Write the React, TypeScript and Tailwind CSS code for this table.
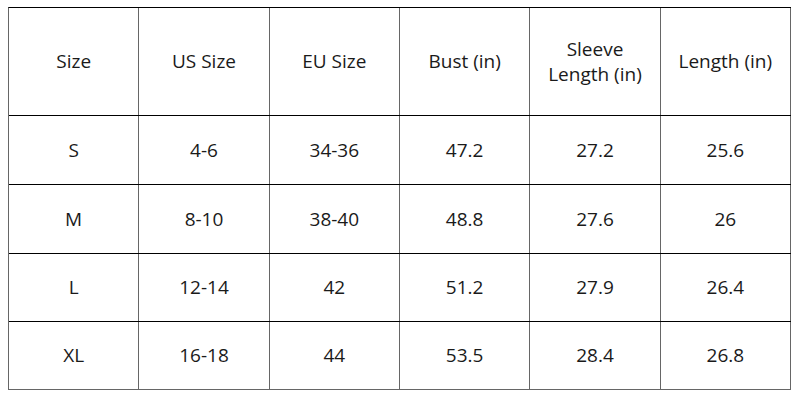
import React from "react";

const header = ["Size", "US Size", "EU Size", "Bust (in)", "Sleeve Length (in)", "Length (in)"];
const rows = [
  ["S", "4-6", "34-36", "47.2", "27.2", "25.6"],
  ["M", "8-10", "38-40", "48.8", "27.6", "26"],
  ["L", "12-14", "42", "51.2", "27.9", "26.4"],
  ["XL", "16-18", "44", "53.5", "28.4", "26.8"],
];
const heights = ["h-[69px]", "h-[69px]", "h-[68px]", "h-[68px]"];

export default function App() {
  return (
    <div className="w-[800px] h-[400px] bg-white pl-[8px] pt-[7px]" style={{ fontFamily: '"Open Sans", sans-serif' }}>
      <div className="w-[783px] border-t border-black border-l border-l-[#666]">
        <div className="grid grid-cols-6 h-[108px] border-b border-black">
          {header.map((h, i) => (
            <div key={i} className="flex items-center justify-center text-center border-r border-[#666] text-[19px] leading-[25px] text-[#1a1a1a] px-2">
              {i === 4 ? (<span>Sleeve<br />Length (in)</span>) : h}
            </div>
          ))}
        </div>
        {rows.map((r, ri) => (
          <div key={ri} className={`grid grid-cols-6 ${heights[ri]} border-b ${ri === 3 ? "border-[#666]" : "border-black"}`}>
            {r.map((c, ci) => (
              <div key={ci} className="flex items-center justify-center border-r border-[#666] text-[19px] text-[#1a1a1a]">
                {c}
              </div>
            ))}
          </div>
        ))}
      </div>
    </div>
  );
}
